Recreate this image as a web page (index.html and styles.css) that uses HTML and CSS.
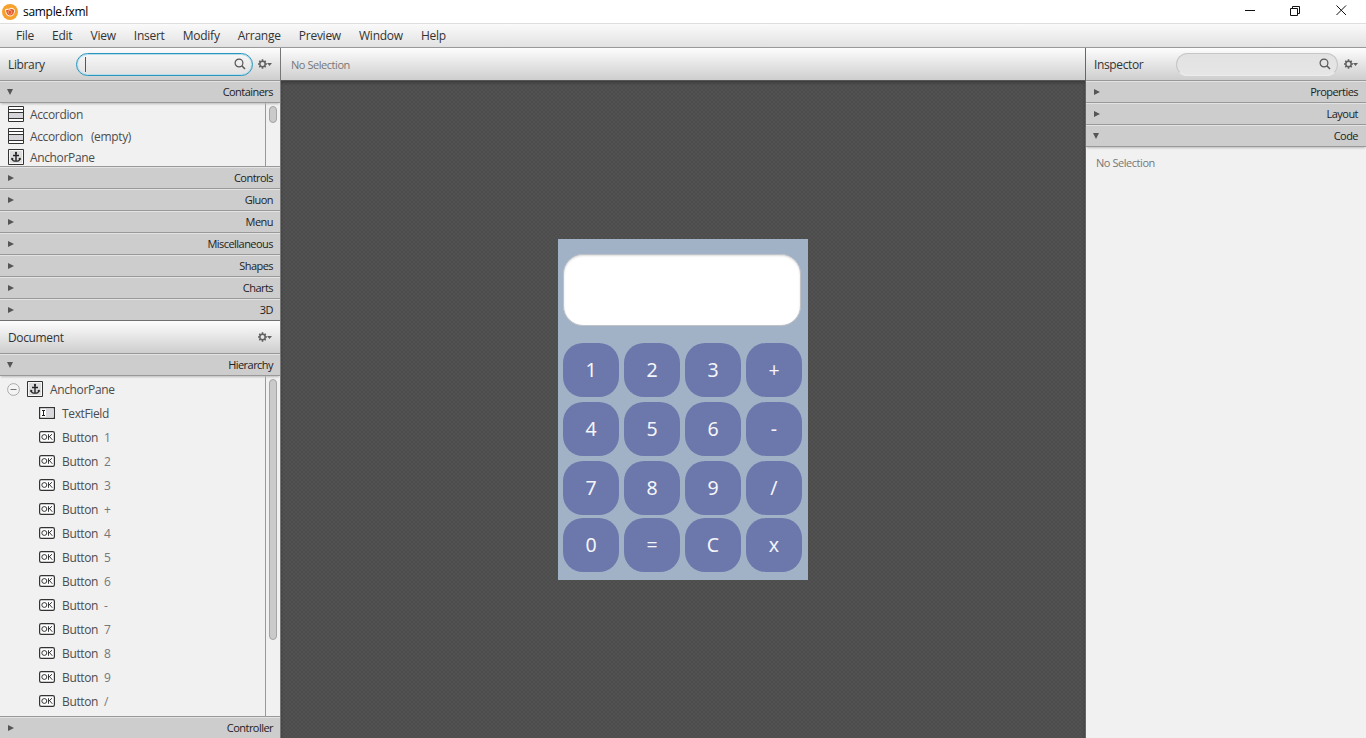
FILE: index.html
```html
<!DOCTYPE html>
<html lang="en">
<head>
<meta charset="utf-8">
<title>sample.fxml</title>
<link rel="stylesheet" href="styles.css">
</head>
<body>
<svg class="defs" width="0" height="0">
  <symbol id="gear" viewBox="0 0 14 10">
    <path d="M4.500 .3v1.800M4.500 7.900v1.800M0 5h1.800M7.200 5H9M1.300 1.800l1.300 1.300M6.400 6.900l1.300 1.300M1.300 8.200l1.300-1.300M6.400 3.100l1.300-1.300" stroke="#606060" stroke-width="1.600"/>
    <circle cx="4.500" cy="5" r="2.700" fill="none" stroke="#606060" stroke-width="1.500"/>
    <path d="M9 4h5l-2.500 3z" fill="#606060"/>
  </symbol>
  <symbol id="search" viewBox="0 0 12 12">
    <circle cx="5" cy="5" r="3.900" fill="none" stroke="#555" stroke-width="1.200"/>
    <path d="M7.800 7.800l3.200 3.200" stroke="#555" stroke-width="1.500"/>
  </symbol>
  <symbol id="accordion" viewBox="0 0 16 16">
    <path d="M.5 .5h15v15H.5z" fill="#fff" stroke="#333"/>
    <path d="M1 7h14v5H1z" fill="#d6d6da"/>
    <path d="M0 3.500h16M0 6.500h16M0 12.500h16" stroke="#333"/>
  </symbol>
  <symbol id="anchor" viewBox="0 0 16 16">
    <path d="M.5 .5h15v15H.5z" fill="#f6f6f6" stroke="#333"/>
    <path d="M2 2h12v12H2z" fill="#dedee1"/>
    <path d="M8 4v8M5 6.500h6" stroke="#222" stroke-width="1.400"/>
    <circle cx="8" cy="3.900" r="1.100" fill="#222"/>
    <path d="M4 9.800c.5 1.900 1.700 2.500 4 2.500s3.500-.6 4-2.500M3.200 10.500L4 9.300l1.300 1M12.800 10.500L12 9.300l-1.300 1" fill="none" stroke="#222" stroke-width="1.100"/>
  </symbol>
  <symbol id="field" viewBox="0 0 16 12">
    <path d="M.6 .6h14.800v10.800H.6z" fill="#fff" stroke="#333" stroke-width="1.200"/>
    <path d="M7 2h7v8H7z" fill="#d8d8dc"/>
    <path d="M3 3.500h3M3 8.500h3M4.500 3.500v5" stroke="#222"/>
  </symbol>
  <symbol id="ok" viewBox="0 0 16 12">
    <rect x=".6" y=".6" width="14.800" height="10.800" rx="1.600" fill="#fff" stroke="#333" stroke-width="1.200"/>
    <ellipse cx="5.300" cy="6" rx="2.500" ry="2.400" fill="none" stroke="#222" stroke-width=".9"/>
    <path d="M9.500 3.200v5.600M13 3.200L9.700 6.300M10.600 5.600L13.300 8.800" fill="none" stroke="#222" stroke-width=".9"/>
  </symbol>
</svg>
<div class="window">
  <header class="titlebar">
    <svg class="logo" viewBox="0 0 16 16"><circle cx="8" cy="8" r="8" fill="#f5a12b"/><path d="M3 5.500c2-1.500 3 0 5-1.300s4 .3 5 1.800c0 4-2 6.500-5 6.500S3.200 9.500 3 5.500z" fill="#fff0dc"/><path d="M4 6.300c2-.8 3 0 4.500-1s3 .2 3.700 1.200c-.2 3-1.800 5-4.200 5S4.300 9.300 4 6.300z" fill="#e5532d"/><path d="M6 7.300l2-1 2 1-.4 2.300-1.800.8L6.300 9z" fill="none" stroke="#ffc48f" stroke-width=".7"/></svg>
    <span class="title">sample.fxml</span>
    <svg class="controls" viewBox="0 0 110 16" fill="none" stroke="#111"><path d="M5 8.500h10"/><path d="M50.500 6.500h7v7h-7zM52.500 6V4.500h7v7H58"/><path d="M96.500 3.500l9.500 9.500M106 3.500L96.500 13"/></svg>
  </header>
  <nav class="menubar"><span>File</span><span>Edit</span><span>View</span><span>Insert</span><span>Modify</span><span>Arrange</span><span>Preview</span><span>Window</span><span>Help</span></nav>
  <div class="workspace">
    <aside class="left">
      <div class="toolbar"><span>Library</span><div class="search active"><i class="caret"></i><svg class="glass"><use href="#search"/></svg></div><svg class="gear"><use href="#gear"/></svg></div>
      <div class="section open">Containers</div>
      <div class="pane library">
        <div class="list">
          <div class="item"><svg class="ic"><use href="#accordion"/></svg>Accordion</div>
          <div class="item"><svg class="ic"><use href="#accordion"/></svg>Accordion<span class="qualifier">(empty)</span></div>
          <div class="item"><svg class="ic"><use href="#anchor"/></svg>AnchorPane</div>
        </div>
        <div class="track"><div class="thumb"></div></div>
      </div>
      <div class="section">Controls</div>
      <div class="section">Gluon</div>
      <div class="section">Menu</div>
      <div class="section">Miscellaneous</div>
      <div class="section">Shapes</div>
      <div class="section">Charts</div>
      <div class="section last">3D</div>
      <div class="toolbar document"><span>Document</span><svg class="gear"><use href="#gear"/></svg></div>
      <div class="section open">Hierarchy</div>
      <div class="pane hierarchy">
        <div class="list">
          <div class="node root"><svg class="fold" viewBox="0 0 13 13"><circle cx="6.500" cy="6.500" r="5.900" fill="#f4f4f4" stroke="#aaa"/><path d="M3.500 6.500h6" stroke="#777"/></svg><svg class="ic"><use href="#anchor"/></svg>AnchorPane</div>
          <div class="node"><svg class="wide"><use href="#field"/></svg>TextField</div>
          <div class="node"><svg class="wide"><use href="#ok"/></svg>Button<em>1</em></div>
          <div class="node"><svg class="wide"><use href="#ok"/></svg>Button<em>2</em></div>
          <div class="node"><svg class="wide"><use href="#ok"/></svg>Button<em>3</em></div>
          <div class="node"><svg class="wide"><use href="#ok"/></svg>Button<em>+</em></div>
          <div class="node"><svg class="wide"><use href="#ok"/></svg>Button<em>4</em></div>
          <div class="node"><svg class="wide"><use href="#ok"/></svg>Button<em>5</em></div>
          <div class="node"><svg class="wide"><use href="#ok"/></svg>Button<em>6</em></div>
          <div class="node"><svg class="wide"><use href="#ok"/></svg>Button<em>-</em></div>
          <div class="node"><svg class="wide"><use href="#ok"/></svg>Button<em>7</em></div>
          <div class="node"><svg class="wide"><use href="#ok"/></svg>Button<em>8</em></div>
          <div class="node"><svg class="wide"><use href="#ok"/></svg>Button<em>9</em></div>
          <div class="node"><svg class="wide"><use href="#ok"/></svg>Button<em>/</em></div>
        </div>
        <div class="track"><div class="thumb long"></div></div>
      </div>
      <div class="section foot">Controller</div>
    </aside>
    <main class="center">
      <div class="toolbar crumbs"><span>No Selection</span></div>
      <div class="canvas">
        <div class="calc">
          <div class="display"></div>
          <div class="keys">
            <b>1</b><b>2</b><b>3</b><b>+</b>
            <b>4</b><b>5</b><b>6</b><b>-</b>
            <b>7</b><b>8</b><b>9</b><b>/</b>
          </div>
          <div class="keys bottom"><b>0</b><b>=</b><b>C</b><b>x</b></div>
        </div>
      </div>
    </main>
    <aside class="right">
      <div class="toolbar"><span>Inspector</span><div class="search"><svg class="glass"><use href="#search"/></svg></div><svg class="gear"><use href="#gear"/></svg></div>
      <div class="section">Properties</div>
      <div class="section">Layout</div>
      <div class="section open">Code</div>
      <div class="empty">No Selection</div>
    </aside>
  </div>
</div>
</body>
</html>
```
FILE: styles.css
```css
* { box-sizing: border-box; }
body { margin: 0; background: #f1f1f1; font: 12px/16px "Open Sans", "Noto Sans", sans-serif; letter-spacing: -0.36px; color: #333; overflow: hidden; }
svg { display: block; flex: none; }
.defs { position: absolute; }
.window { width: 1366px; height: 738px; display: flex; flex-direction: column; }

.titlebar { height: 23px; background: #fff; display: flex; align-items: center; padding: 0 20px 0 2px; }
.logo { width: 16px; height: 16px; margin-right: 5px; }
.title { color: #000; flex: 1; letter-spacing: -0.3px; padding-top: 1px; }
.controls { width: 110px; height: 16px; margin: -3px -4px 0 0; }
.menubar { height: 25px; border-top: 1px solid #dedede; border-bottom: 1px solid #999; background: linear-gradient(#fafafa, #e2e2e2); display: flex; align-items: center; padding-left: 16px; gap: 18.15px; letter-spacing: -0.26px; }

.workspace { flex: 1; min-height: 0; display: grid; grid-template-columns: 281px 804px 281px; }
.left, .center, .right { display: flex; flex-direction: column; min-width: 0; min-height: 0; }
.left { border-right: 1px solid #777; background: #f1f1f1; }
.right { border-left: 1px solid #666; background: #f1f1f1; }
.toolbar { height: 33px; flex: none; display: flex; align-items: center; padding: 0 8px; background: linear-gradient(#fdfdfd, #cecece); border-bottom: 1px solid #989898; }
.toolbar > span { flex: 1; padding-top: 2px; }
.search { width: 162px; height: 23px; border: 1px solid #c6c6c6; border-bottom-color: #ececec; border-radius: 12px; display: flex; align-items: center; justify-content: flex-end; padding: 0 6px; background: linear-gradient(#e2e2e2, #e6e6e6); }
.search.active { width: 177px; border: 1px solid #2a96bd; box-shadow: inset 0 0 0 1px #b9dce9; background: linear-gradient(#f7f7f7, #e2e2e2); justify-content: space-between; padding-left: 8px; }
.caret { width: 1px; height: 15px; background: #555; }
.glass { width: 12px; height: 12px; }
.gear { width: 14px; height: 10px; margin-left: 6px; }
.left .gear { margin-left: 5px; }

.section { height: 22px; flex: none; display: flex; align-items: center; justify-content: space-between; padding: 0 8px; background: #cdcdcd; border-top: 1px solid #e3e3e3; border-bottom: 1px solid #999; font-size: 11px; letter-spacing: -0.54px; color: #222; }
.left .section { padding-right: 7px; }
.section::before { content: ""; border-left: 6px solid #555; border-top: 3px solid transparent; border-bottom: 3px solid transparent; }
.section.open::before { border-left: 3px solid transparent; border-right: 3px solid transparent; border-top: 6px solid #555; border-bottom: 0; margin-left: -1px; }
.section.open { box-shadow: 0 2px 2px -1px #bbb; position: relative; }
.section.last { border-bottom-color: #707070; }
.section.foot { height: 21px; border-bottom: 0; }
.pane { display: flex; overflow: hidden; border-bottom: 1px solid #999; color: #4c4c4c; }
.library { height: 64px; flex: none; }
.hierarchy { flex: 1; min-height: 0; }
.list { width: 266px; border-right: 1px solid #999; overflow: hidden; }
.item { height: 22px; display: flex; align-items: center; gap: 6px; padding: 1px 0 0 8px; }
.item svg { margin-bottom: 1px; }
.item:last-child { margin-top: -1px; }
.qualifier { margin-left: 2px; }
.ic { width: 16px; height: 16px; }
.node { height: 24px; display: flex; align-items: center; gap: 7px; padding: 2px 0 0 39px; }
.node svg { margin-bottom: 2px; }
.node.root { padding-left: 7px; margin-top: 1px; }
.fold { width: 13px; height: 13px; }
.wide { width: 16px; height: 12px; }
.node em { font-style: normal; color: #777; margin-left: -1px; }
.track { padding: 3px 0 0 3px; }
.thumb { width: 8px; height: 17px; border: 1px solid #a4a4a4; border-radius: 4px; background: #cacaca; }
.thumb.long { height: 261px; }

.crumbs { font-size: 11px; color: #777; padding-left: 10px; border-bottom-color: #555; letter-spacing: -0.45px; }
.canvas { flex: 1; padding: 158px 0 0 277px; background: repeating-conic-gradient(#4c4c4c 0 25%, #525252 0 50%) 0 0 / 4px 4px; box-shadow: inset 0 2px 3px #3d3d3d; }
.calc { width: 250px; height: 341px; padding: 15px 5px; background: #a2b2c6; }
.display { width: 238px; height: 72px; border: 1px solid #bfc2c6; border-radius: 20px; background: #fff; box-shadow: inset 0 1px 2px #ddd; }
.keys { display: grid; grid-template-columns: repeat(4, 56px); grid-auto-rows: 54px; gap: 5px; margin-top: 17px; }
.keys.bottom { margin-top: 3px; }
.keys b { display: flex; align-items: center; justify-content: center; border-radius: 20px; background: #6c77ac; color: #f4f5fa; font: 400 19.5px/26px "Noto Sans", "Open Sans", sans-serif; letter-spacing: 0; }
.empty { padding: 8px 10px; font-size: 11px; color: #777; letter-spacing: -0.45px; }
```
